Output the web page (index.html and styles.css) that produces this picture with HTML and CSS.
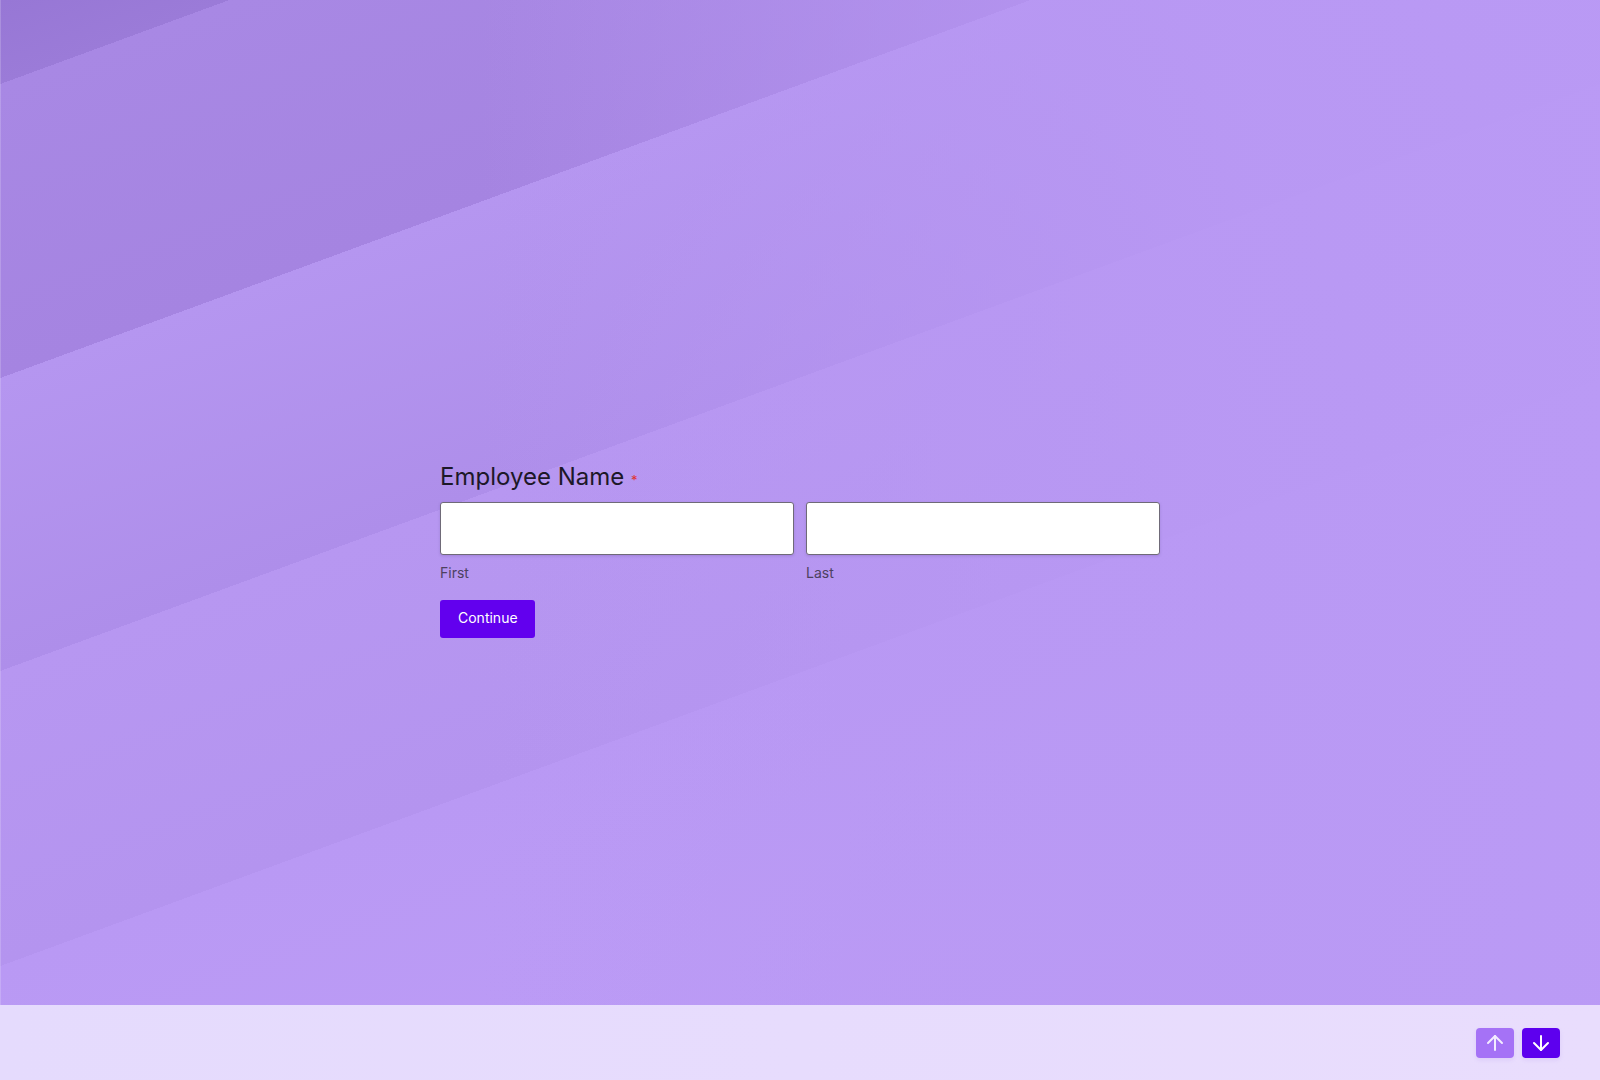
FILE: index.html
```html
<!DOCTYPE html>
<html lang="en">
<head>
<meta charset="utf-8">
<title>Employee Name</title>
<link rel="stylesheet" href="styles.css">
</head>
<body>
<div class="page">
  <main class="stage">
    <form class="field">
      <h1 class="label">Employee Name <span class="req">*</span></h1>
      <div class="inputs">
        <div class="col">
          <input class="box" type="text" aria-label="First">
          <span class="sub">First</span>
        </div>
        <div class="col">
          <input class="box" type="text" aria-label="Last">
          <span class="sub">Last</span>
        </div>
      </div>
      <button class="btn" type="button">Continue</button>
    </form>
  </main>
  <footer class="bar">
    <button class="nav up" type="button" aria-label="Previous">
      <svg width="24" height="24" viewBox="0 0 24 24" fill="none" stroke="currentColor" stroke-width="2" stroke-linecap="round" stroke-linejoin="round"><path d="M12 19V5"/><path d="M5 12l7-7 7 7"/></svg>
    </button>
    <button class="nav down" type="button" aria-label="Next">
      <svg width="24" height="24" viewBox="0 0 24 24" fill="none" stroke="currentColor" stroke-width="2" stroke-linecap="round" stroke-linejoin="round"><path d="M12 5v14"/><path d="M19 12l-7 7-7-7"/></svg>
    </button>
  </footer>
</div>
</body>
</html>
```

FILE: styles.css
```css
html, body {
  margin: 0;
  padding: 0;
  height: 100%;
}

body {
  font-family: Inter, "Noto Sans", sans-serif;
  background: #b596f0;
}

.page {
  height: 1080px;
  display: flex;
  flex-direction: column;
}

.stage {
  flex: 1;
  padding-top: 462px;
  box-sizing: border-box;
  box-shadow: inset 1px 0 0 rgba(255, 255, 255, 0.18);
  background:
    linear-gradient(to right,
      rgba(184, 152, 243, 0) 0%,
      rgba(184, 152, 243, 0) 30%,
      rgba(184, 152, 243, 0.55) 55%,
      rgba(185, 153, 244, 0.92) 78%,
      rgba(186, 154, 245, 0.95) 100%),
    linear-gradient(159.85deg,
      #9777d5 0px, #9b7bd8 79px,
      #a888e4 79px, #a584e1 355px,
      #b596f0 355px, #ae8eea 630px,
      #b797f1 630px, #b494ef 907px,
      #b999f4 907px, #bf9ef8 1494px);
}

.field {
  width: 720px;
  margin: 0 auto;
}

.label {
  margin: 0;
  font-size: 24px;
  line-height: 29px;
  font-weight: 400;
  color: #1d1828;
}

.req {
  font-size: 13px;
  color: #e0342f;
}

.inputs {
  display: grid;
  grid-template-columns: 1fr 1fr;
  column-gap: 12px;
  margin-top: 7px;
}

.box {
  display: block;
  width: 100%;
  height: 53px;
  box-sizing: border-box;
  margin: 0;
  border: 1px solid #6f6a78;
  border-radius: 3px;
  background: #fff;
  box-shadow: 0 1px 3px rgba(40, 20, 80, 0.15);
  outline: none;
}

.sub {
  display: block;
  margin-top: 9px;
  font-size: 14px;
  line-height: 17px;
  color: #4d4160;
}

.btn {
  display: block;
  box-sizing: border-box;
  margin-top: 19px;
  height: 38px;
  padding: 0 17px 3px 18px;
  border: 0;
  border-radius: 3px;
  background: #6200ee;
  color: #fff;
  font-family: Inter, "Noto Sans", sans-serif;
  font-size: 14px;
  font-weight: 400;
  cursor: pointer;
}

.bar {
  height: 75px;
  flex: none;
  display: flex;
  justify-content: flex-end;
  align-items: center;
  gap: 8px;
  padding-right: 40px;
  background: linear-gradient(to right, #e5dbfd, #e9ddfd);
}

.nav {
  width: 38px;
  height: 30px;
  padding: 0;
  border: 0;
  border-radius: 4px;
  display: flex;
  align-items: center;
  justify-content: center;
  box-shadow: 0 2px 5px rgba(90, 30, 200, 0.08);
  cursor: pointer;
}

.nav svg {
  display: block;
}

.up {
  background: #a572f6;
  color: #f3ecff;
}

.down {
  background: #5d00ee;
  color: #ffffff;
}
```
